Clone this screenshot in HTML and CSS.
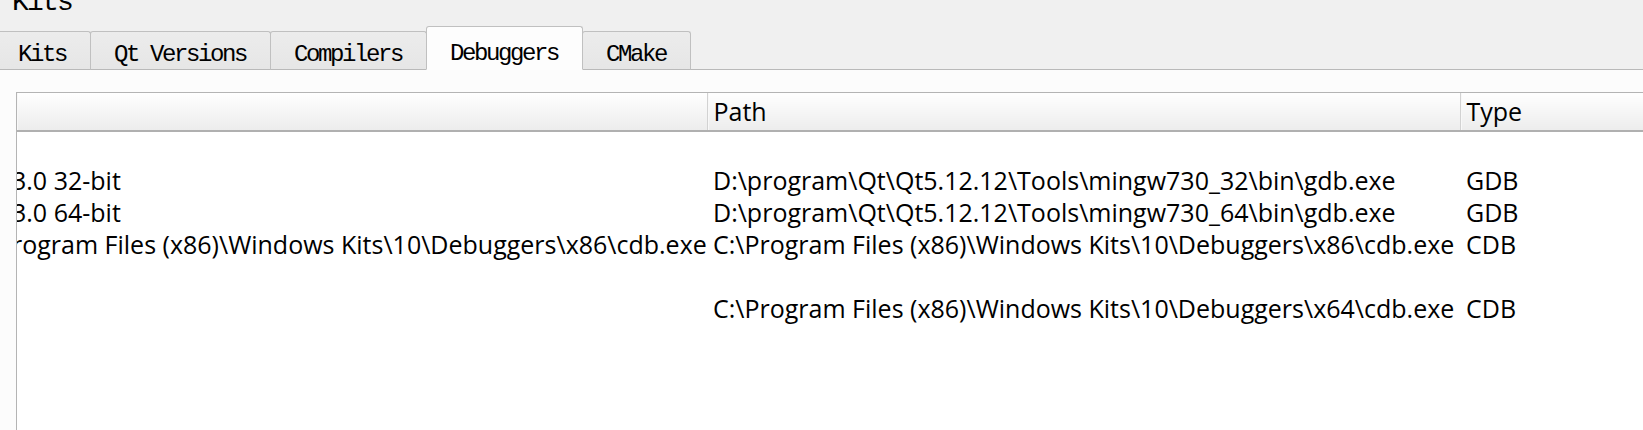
FILE: index.html
```html
<!DOCTYPE html>
<html lang="en">
<head>
    <meta charset="UTF-8">
    <meta name="viewport" content="width=device-width, initial-scale=1.0">
    <title>Kits - Debuggers</title>
    <link rel="stylesheet" href="styles.css">
</head>
<body>

<div class="page-title">Kits</div>

<div class="tab-bar">
    <div class="tab">Kits</div>
    <div class="tab">Qt Versions</div>
    <div class="tab">Compilers</div>
    <div class="tab active">Debuggers</div>
    <div class="tab">CMake</div>
</div>

<div class="panel">
    <div class="frame">
        <table id="debuggersTable">
            <colgroup>
                <col class="col-name">
                <col class="col-path">
                <col class="col-type">
            </colgroup>
            <thead>
                <tr>
                    <th class="name"></th>
                    <th>Path</th>
                    <th>Type</th>
                </tr>
            </thead>
            <tbody>
                <!-- group row, label scrolled out of view -->
                <tr>
                    <td class="name"></td>
                    <td></td>
                    <td></td>
                </tr>
                <tr>
                    <td class="name">3.0 32-bit</td>
                    <td>D:\program\Qt\Qt5.12.12\Tools\mingw730_32\bin\gdb.exe</td>
                    <td>GDB</td>
                </tr>
                <tr>
                    <td class="name">3.0 64-bit</td>
                    <td>D:\program\Qt\Qt5.12.12\Tools\mingw730_64\bin\gdb.exe</td>
                    <td>GDB</td>
                </tr>
                <tr>
                    <td class="name">rogram Files (x86)\Windows Kits\10\Debuggers\x86\cdb.exe</td>
                    <td>C:\Program Files (x86)\Windows Kits\10\Debuggers\x86\cdb.exe</td>
                    <td>CDB</td>
                </tr>
                <tr>
                    <td class="name"></td>
                    <td></td>
                    <td></td>
                </tr>
                <tr>
                    <td class="name"></td>
                    <td>C:\Program Files (x86)\Windows Kits\10\Debuggers\x64\cdb.exe</td>
                    <td>CDB</td>
                </tr>
                <tr>
                    <td class="name"></td>
                    <td></td>
                    <td></td>
                </tr>
                <tr>
                    <td class="name"></td>
                    <td></td>
                    <td></td>
                </tr>
            </tbody>
        </table>
    </div>
</div>

</body>
</html>
```

FILE: styles.css
```css
body {
    margin: 0;
    background-color: #f0f0f0;
    font-family: "Open Sans", "Noto Sans", sans-serif;
    color: #000;
    height: 430px;
    overflow: hidden;
}

.page-title {
    font-family: "Liberation Mono", monospace;
    font-size: 28px;
    letter-spacing: -1.8px;
    line-height: 28px;
    height: 38px;
    margin-top: -11px;
    padding-left: 12px;
    overflow: hidden;
}

/* tab strip */
.tab-bar {
    display: flex;
    align-items: flex-end;
    height: 42px;
    margin-left: -6px;
    border-bottom: 1px solid #b9b9b9;
}
.tab {
    font-family: "Liberation Mono", monospace;
    font-size: 24px;
    letter-spacing: -2.4px;
    height: 37px;
    line-height: 46px;
    padding: 0 24px 0 23px;
    margin-left: -1px;
    margin-bottom: -1px;
    background: linear-gradient(#ececec, #e6e6e6);
    border: 1px solid #c0c0c0;
    border-bottom-color: #b9b9b9;
    border-radius: 3px 3px 0 0;
}
.tab:first-child {
    margin-left: 0;
}
.tab.active {
    position: relative;
    height: 42px;
    line-height: 54px;
    background: #fdfdfd;
    border-bottom-color: #fdfdfd;
    z-index: 1;
}

/* page body */
.panel {
    background-color: #fcfcfc;
    padding: 22px 0 0 16px;
    height: 400px;
}
.frame {
    background-color: #fff;
    border-left: 1px solid #b4b4b4;
    border-top: 1px solid #b4b4b4;
    height: 400px;
    overflow: hidden;
}

table {
    width: 1700px;
    table-layout: fixed;
    border-collapse: collapse;
    font-size: 25px;
}
.col-name {
    width: 690px;
}
.col-path {
    width: 753px;
}
th {
    height: 37px;
    padding: 0 6px;
    text-align: left;
    font-weight: normal;
    line-height: 37px;
    background: linear-gradient(#ffffff, #ececec);
    border-bottom: 2px solid #b0b0b0;
    border-left: 1px solid #d2d2d2;
    box-shadow: inset 1px 0 0 #f8f8f8;
}
th.name {
    border-left: none;
}
td {
    height: 32px;
    padding: 0 6px;
    line-height: 32px;
    white-space: nowrap;
    overflow: hidden;
}
td.name {
    padding: 0;
    text-indent: -5px;
}
```
